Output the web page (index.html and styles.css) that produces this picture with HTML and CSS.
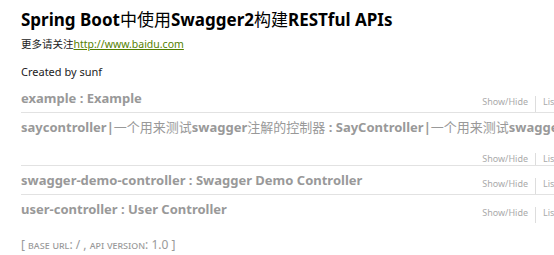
FILE: index.html
```html
<!DOCTYPE html>
<html lang="en">

<head>
    <meta charset="UTF-8">
    <title>Swagger UI</title>
    <link rel="stylesheet" href="styles.css">
</head>

<body>
    <div class="swagger-wrap">
        <div class="info">
            <div class="info-title">Spring Boot<span class="cjk">中使用</span>Swagger2<span class="cjk">构建</span>RESTful APIs</div>
            <div class="info-desc">更多请关注<a href="#">http://www.baidu.com</a></div>
            <div class="info-contact">Created by sunf</div>
        </div>

        <ul class="resources">
            <li class="resource">
                <h2>example : Example</h2>
                <ul class="options">
                    <li>Show/Hide</li>
                    <li>List Operations</li>
                    <li>Expand Operations</li>
                </ul>
            </li>
            <li class="resource">
                <h2>saycontroller|<span class="cjk">一个用来测试</span>swagger<span class="cjk">注解的控制器</span> : SayController|<span class="cjk">一个用来测试</span>swagger<span class="cjk">注解的控制器</span></h2>
                <ul class="options">
                    <li>Show/Hide</li>
                    <li>List Operations</li>
                    <li>Expand Operations</li>
                </ul>
            </li>
            <li class="resource">
                <h2>swagger-demo-controller : Swagger Demo Controller</h2>
                <ul class="options">
                    <li>Show/Hide</li>
                    <li>List Operations</li>
                    <li>Expand Operations</li>
                </ul>
            </li>
            <li class="resource">
                <h2>user-controller : User Controller</h2>
                <ul class="options">
                    <li>Show/Hide</li>
                    <li>List Operations</li>
                    <li>Expand Operations</li>
                </ul>
            </li>
        </ul>

        <div class="footer">
            [ <span class="caps">base url</span>: / , <span class="caps">api version</span>: 1.0 ]
        </div>
    </div>
</body>

</html>
```

FILE: styles.css
```css
html {
    overflow: hidden;
}

body {
    font-family: "Noto Sans", "Noto Sans CJK SC", sans-serif;
    background-color: #fff;
    color: #222;
    margin: 0;
    padding: 0;
}

.swagger-wrap {
    width: 682px;
    padding: 7px 0 0 21px;
}

.cjk {
    font-weight: normal;
}

.info-title {
    font-size: 17px;
    font-weight: bold;
    line-height: 26px;
    color: #000;
}

.info-desc {
    font-size: 10.5px;
    line-height: 16px;
    margin-top: 3px;
}

.info-desc a {
    color: #547f00;
}

.info-contact {
    font-size: 11px;
    line-height: 16px;
    margin-top: 12px;
}

.resources {
    list-style: none;
    margin: 4px 0 0;
    padding: 0;
}

.resource {
    display: flex;
    flex-wrap: wrap;
    border-bottom: 1px solid #e2e2e2;
}

.resource:last-child {
    border-bottom: none;
}

.resource h2 {
    margin: 0;
    font-size: 13px;
    font-weight: bold;
    line-height: 28px;
    color: #999;
    white-space: nowrap;
}

.options {
    list-style: none;
    display: flex;
    margin: 12px 0 0 auto;
    padding: 0;
    font-size: 9px;
    line-height: 12px;
    color: #aaa;
}

.options li {
    padding: 0 7px;
    border-right: 1px solid #ddd;
}

.options li:first-child {
    padding-left: 0;
}

.options li:last-child {
    border-right: none;
    padding-right: 0;
}

.footer {
    margin-top: 13px;
    font-size: 12px;
    color: #999;
}

.caps {
    font-variant: small-caps;
    font-size: 11px;
}
```
